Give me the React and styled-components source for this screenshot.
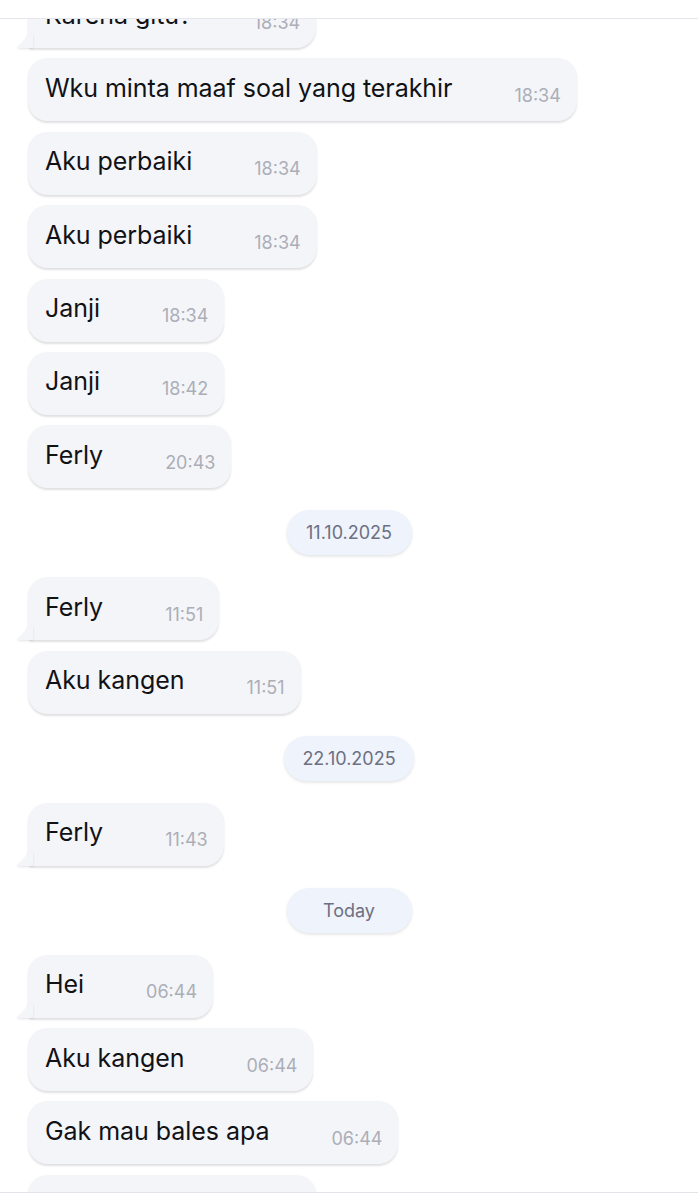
import React from "react";
import styled, { createGlobalStyle } from "styled-components";

const GlobalStyle = createGlobalStyle`
  html, body {
    margin: 0;
    padding: 0;
    background: #ffffff;
  }
  body {
    font-family: Inter, "Noto Sans", sans-serif;
    -webkit-font-smoothing: antialiased;
  }
`;

const Screen = styled.div`
  display: flex;
  flex-direction: column;
  width: 698px;
  height: 1200px;
  background: #fff;
  overflow: hidden;
`;

const TopBar = styled.div`
  flex: 0 0 18px;
  background: #fff;
  border-bottom: 1px solid #e6e7ec;
`;

const Feed = styled.div`
  flex: 1;
  overflow: hidden;
`;

const List = styled.div`
  display: flex;
  flex-direction: column;
  align-items: flex-start;
  gap: 10.4px;
  padding: 0 28px;
  margin-top: -34px;
`;

const BottomBar = styled.div`
  flex: 0 0 7px;
  background: #fff;
  border-top: 1px solid #e3e4ea;
`;

const Bubble = styled.div`
  position: relative;
  display: flex;
  align-items: center;
  flex: 0 0 auto;
  height: 63px;
  box-sizing: border-box;
  padding: 0 16px 0 17px;
  background: #f4f5f9;
  border-radius: 20px;
  border-bottom-left-radius: ${(p) => (p.$tail ? "5px" : "20px")};
  box-shadow: 0 1.5px 2px rgba(20, 24, 40, 0.13);
`;

const Text = styled.span`
  font-size: 25px;
  line-height: 30px;
  color: #111216;
  letter-spacing: -0.05px;
  white-space: nowrap;
  margin-top: -4px;
`;

const Time = styled.span`
  margin-left: 62px;
  padding-top: 11px;
  font-size: 18px;
  color: #abaeb7;
  white-space: nowrap;
`;

const Tail = styled.svg`
  position: absolute;
  left: -11px;
  bottom: 0;
  width: 16px;
  height: 14px;
  filter: drop-shadow(0 1.5px 1px rgba(20, 24, 40, 0.12));
`;

const DateRow = styled.div`
  align-self: stretch;
  display: flex;
  justify-content: center;
  margin: 11.6px 0;
`;

const DatePill = styled.div`
  display: flex;
  align-items: center;
  justify-content: center;
  box-sizing: border-box;
  height: 45px;
  min-width: 125px;
  padding: 0 18px;
  border-radius: 23px;
  background: #eff3fb;
  box-shadow: 0 1.5px 3px rgba(20, 24, 40, 0.12);
  font-size: 18px;
  color: #6c7082;
`;

const messages = [
  { type: "msg", text: "Karena gitu?", time: "18:34", tail: true },
  { type: "msg", text: "Wku minta maaf soal yang terakhir", time: "18:34" },
  { type: "msg", text: "Aku perbaiki", time: "18:34" },
  { type: "msg", text: "Aku perbaiki", time: "18:34" },
  { type: "msg", text: "Janji", time: "18:34" },
  { type: "msg", text: "Janji", time: "18:42" },
  { type: "msg", text: "Ferly", time: "20:43" },
  { type: "date", text: "11.10.2025" },
  { type: "msg", text: "Ferly", time: "11:51", tail: true },
  { type: "msg", text: "Aku kangen", time: "11:51" },
  { type: "date", text: "22.10.2025" },
  { type: "msg", text: "Ferly", time: "11:43", tail: true },
  { type: "date", text: "Today" },
  { type: "msg", text: "Hei", time: "06:44", tail: true },
  { type: "msg", text: "Aku kangen", time: "06:44" },
  { type: "msg", text: "Gak mau bales apa", time: "06:44" },
  { type: "msg", text: "Aku nunggu", time: "06:44" },
];

function Message({ text, time, tail }) {
  return (
    <Bubble $tail={tail}>
      {tail && (
        <Tail viewBox="0 0 16 14">
          <path d="M16 0 L16 14 L3 14 C1 14 0 13.2 0.6 12.6 C4.5 9.5 9 6 11 0 Z" fill="#f4f5f9" />
        </Tail>
      )}
      <Text>{text}</Text>
      <Time>{time}</Time>
    </Bubble>
  );
}

export default function App() {
  return (
    <>
      <GlobalStyle />
      <Screen>
        <TopBar />
        <Feed>
          <List>
            {messages.map((m, i) =>
              m.type === "date" ? (
                <DateRow key={i}>
                  <DatePill>{m.text}</DatePill>
                </DateRow>
              ) : (
                <Message key={i} {...m} />
              )
            )}
          </List>
        </Feed>
        <BottomBar />
      </Screen>
    </>
  );
}
